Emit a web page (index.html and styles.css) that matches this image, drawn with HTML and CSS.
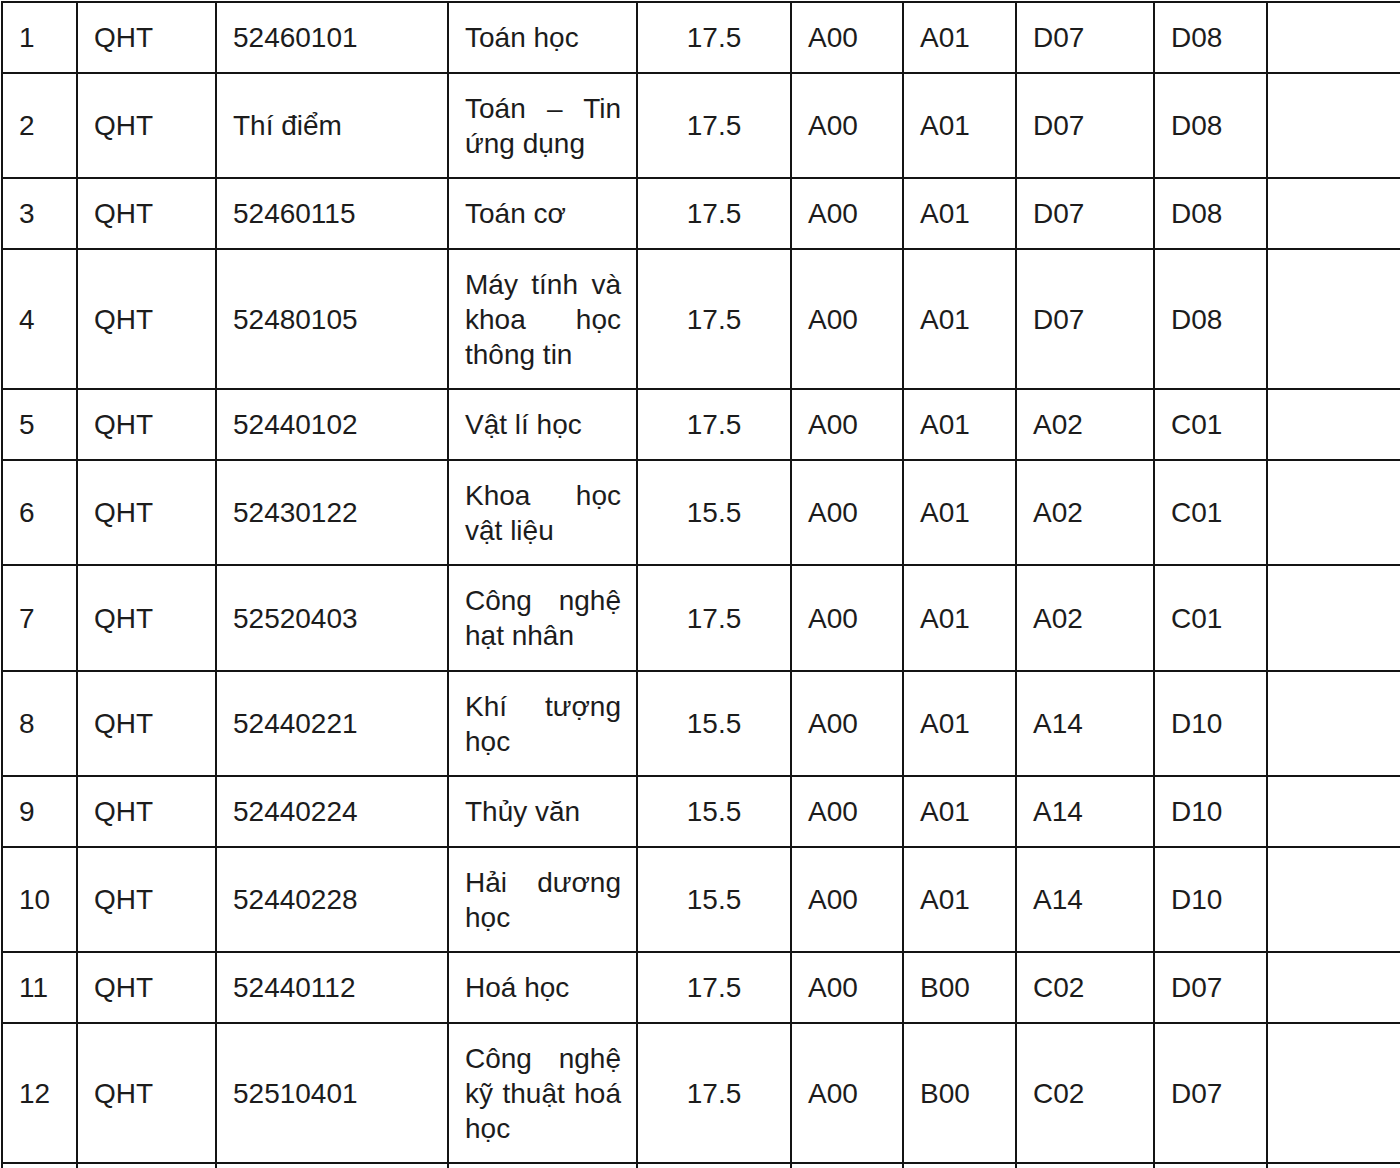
FILE: index.html
```html
<!DOCTYPE html>
<html lang="vi">
<head>
<meta charset="utf-8">
<title>Bảng điểm chuẩn</title>
<link rel="stylesheet" href="styles.css">
</head>
<body>
<div class="sheet">
  <div class="c">1</div><div class="c">QHT</div><div class="c">52460101</div><div class="c name">Toán học</div><div class="c num">17.5</div><div class="c">A00</div><div class="c">A01</div><div class="c">D07</div><div class="c">D08</div><div class="c"></div>
  <div class="c">2</div><div class="c">QHT</div><div class="c">Thí điểm</div><div class="c name">Toán – Tin ứng dụng</div><div class="c num">17.5</div><div class="c">A00</div><div class="c">A01</div><div class="c">D07</div><div class="c">D08</div><div class="c"></div>
  <div class="c">3</div><div class="c">QHT</div><div class="c">52460115</div><div class="c name">Toán cơ</div><div class="c num">17.5</div><div class="c">A00</div><div class="c">A01</div><div class="c">D07</div><div class="c">D08</div><div class="c"></div>
  <div class="c">4</div><div class="c">QHT</div><div class="c">52480105</div><div class="c name">Máy tính và khoa học thông tin</div><div class="c num">17.5</div><div class="c">A00</div><div class="c">A01</div><div class="c">D07</div><div class="c">D08</div><div class="c"></div>
  <div class="c">5</div><div class="c">QHT</div><div class="c">52440102</div><div class="c name">Vật lí học</div><div class="c num">17.5</div><div class="c">A00</div><div class="c">A01</div><div class="c">A02</div><div class="c">C01</div><div class="c"></div>
  <div class="c">6</div><div class="c">QHT</div><div class="c">52430122</div><div class="c name">Khoa học vật liệu</div><div class="c num">15.5</div><div class="c">A00</div><div class="c">A01</div><div class="c">A02</div><div class="c">C01</div><div class="c"></div>
  <div class="c">7</div><div class="c">QHT</div><div class="c">52520403</div><div class="c name">Công nghệ hạt nhân</div><div class="c num">17.5</div><div class="c">A00</div><div class="c">A01</div><div class="c">A02</div><div class="c">C01</div><div class="c"></div>
  <div class="c">8</div><div class="c">QHT</div><div class="c">52440221</div><div class="c name">Khí tượng học</div><div class="c num">15.5</div><div class="c">A00</div><div class="c">A01</div><div class="c">A14</div><div class="c">D10</div><div class="c"></div>
  <div class="c">9</div><div class="c">QHT</div><div class="c">52440224</div><div class="c name">Thủy văn</div><div class="c num">15.5</div><div class="c">A00</div><div class="c">A01</div><div class="c">A14</div><div class="c">D10</div><div class="c"></div>
  <div class="c">10</div><div class="c">QHT</div><div class="c">52440228</div><div class="c name">Hải dương học</div><div class="c num">15.5</div><div class="c">A00</div><div class="c">A01</div><div class="c">A14</div><div class="c">D10</div><div class="c"></div>
  <div class="c">11</div><div class="c">QHT</div><div class="c">52440112</div><div class="c name">Hoá học</div><div class="c num">17.5</div><div class="c">A00</div><div class="c">B00</div><div class="c">C02</div><div class="c">D07</div><div class="c"></div>
  <div class="c">12</div><div class="c">QHT</div><div class="c">52510401</div><div class="c name">Công nghệ kỹ thuật hoá học</div><div class="c num">17.5</div><div class="c">A00</div><div class="c">B00</div><div class="c">C02</div><div class="c">D07</div><div class="c"></div>
  <div class="c"></div><div class="c"></div><div class="c"></div><div class="c name"></div><div class="c num"></div><div class="c"></div><div class="c"></div><div class="c"></div><div class="c"></div><div class="c"></div>
</div>
</body>
</html>
```
FILE: styles.css
```css
html, body {
  margin: 0;
  padding: 0;
  background: #ffffff;
  overflow: hidden;
}

body {
  width: 1400px;
  height: 1168px;
}

.sheet {
  display: grid;
  grid-template-columns: 73px 137px 230px 187px 152px 110px 111px 136px 111px 200px;
  gap: 2px;
  padding: 2px;
  margin: 1px 0 0 1px;
  width: max-content;
  background: #141414;
  font-family: "Liberation Sans", Arial, sans-serif;
  font-size: 28px;
  line-height: 35px;
  color: #1c1c1c;
}

.c {
  background: #ffffff;
  padding: 17.1px 15px 16.45px 16px;
  display: flex;
  flex-direction: column;
  justify-content: center;
  min-height: 35px;
}

.name {
  text-align: justify;
  padding-right: 15px;
}

.num {
  text-align: center;
  padding-left: 15px;
  padding-right: 15px;
}
```
